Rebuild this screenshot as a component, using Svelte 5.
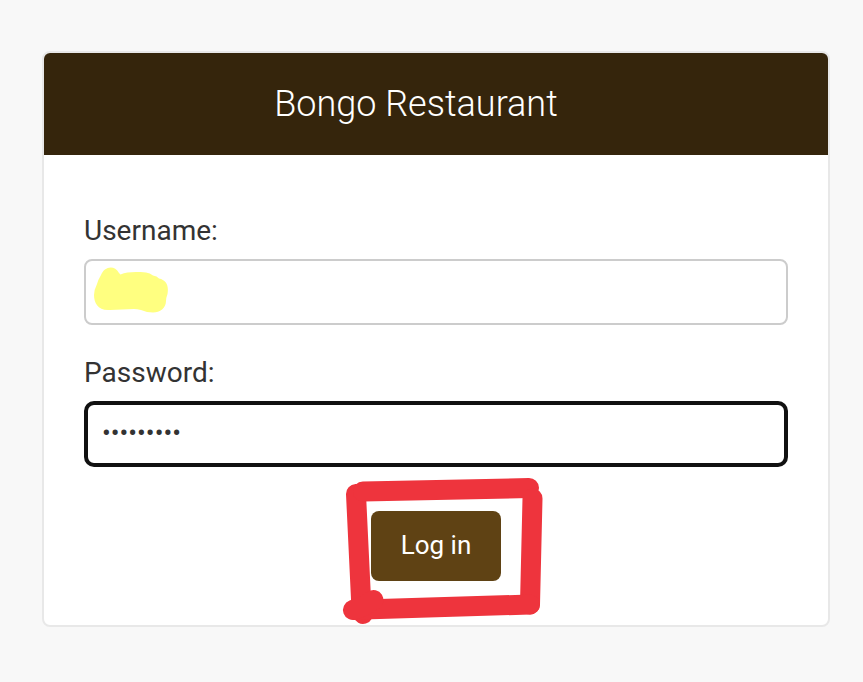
<script>
  let username = $state('');
  const passwordLength = 9;
</script>

<main>
  <section class="card">
    <header><h1>Bongo Restaurant</h1></header>
    <form onsubmit={(e) => e.preventDefault()}>
      <div class="row">
        <label for="username">Username:</label>
        <div class="field">
          <input id="username" type="text" bind:value={username} />
          <svg class="mark" width="76" height="48" viewBox="92 266 76 48" aria-hidden="true">
            <path d="M101 275C104 267 114 264 119 273L120.500 274.500C127 272 134 271.500 146 272.500Q150 273 153 275.500Q157 276 159 278.500C166 280 169 285 167.500 294Q166 298 166 301C166 308 160 312.500 153 312.500Q147 312.500 141 310Q137 309 134 309L110 310C98 311 94 303 94 295Q94 290 97 284Q98 280 101 275Z" fill="#ffff80" />
          </svg>
        </div>
      </div>
      <div class="row">
        <label for="password">Password:</label>
        <div id="password" class="password" role="textbox" tabindex="0">{'•'.repeat(passwordLength)}</div>
      </div>
      <div class="submit">
        <button type="submit">Log in</button>
        <svg class="outline" width="210" height="160" viewBox="338 470 210 160" aria-hidden="true">
          <g fill="none" stroke="#ee343d" stroke-width="20" stroke-linecap="round" stroke-linejoin="round">
            <path d="M356 494L361.500 609L363 614" />
            <path d="M363 491.500L529 488" />
            <path d="M532.500 498.500L530 604.500" />
            <path d="M530 604.500L363 609.500" />
            <path d="M353 610L364 606L373.500 600" />
          </g>
        </svg>
      </div>
    </form>
  </section>
</main>

<style>
  :global(body) { background: #f8f8f8; }
  main {
    box-sizing: border-box;
    height: 682px;
    padding: 51px 33px 0 42px;
    overflow: hidden;
    font-family: Roboto, "Liberation Sans", sans-serif;
    color: #333;
  }
  .card {
    box-sizing: border-box;
    height: 576px;
    border: 2px solid #e8e8e8;
    border-radius: 8px;
    background: #fff;
    overflow: hidden;
  }
  header {
    box-sizing: border-box;
    height: 102px;
    padding-right: 40px;
    display: flex;
    align-items: center;
    justify-content: center;
    background: #35250c;
  }
  h1 { margin: 0; font-size: 36px; line-height: 42px; font-weight: 300; color: #fff; }
  form { padding: 56px 40px 0; }
  .row { height: 142px; }
  label { display: block; height: 48px; line-height: 40px; font-size: 28px; }
  .field { position: relative; height: 66px; }
  input {
    box-sizing: border-box;
    display: block;
    width: 100%;
    height: 66px;
    margin: 0;
    padding: 10px 16px;
    border: 2px solid #ccc;
    border-radius: 8px;
    outline: none;
    background: #fff;
    font: 26px Roboto, sans-serif;
  }
  .mark { position: absolute; left: 8px; top: 7px; }
  .password {
    box-sizing: border-box;
    height: 66px;
    padding: 12px 14px;
    border: 4px solid #111;
    border-radius: 10px;
    outline: none;
    font-size: 26px;
    line-height: 32px;
  }
  .submit {
    position: relative;
    display: flex;
    justify-content: center;
    padding-top: 16px;
  }
  button {
    width: 130px;
    height: 70px;
    padding: 0 0 2px;
    border: 0;
    border-radius: 8px;
    background: #5f4214;
    color: #fff;
    font: 26px Roboto, sans-serif;
  }
  .outline { position: absolute; left: 254px; top: -25px; pointer-events: none; }
</style>
